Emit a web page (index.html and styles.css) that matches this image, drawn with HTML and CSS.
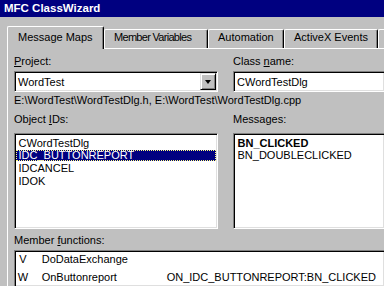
FILE: index.html
```html
<!DOCTYPE html>
<html>
<head>
<meta charset="utf-8">
<link rel="stylesheet" href="styles.css">
</head>
<body>
<div class="titlebar">MFC ClassWizard</div>
<div class="dialog">
  <div class="tabs">
    <div class="tab active w-mm">Message Maps</div>
    <div class="tab w-mv"><span class="tight">Member Variables</span></div>
    <div class="tab w-au">Automation</div>
    <div class="tab w-ax">ActiveX Events</div>
    <div class="tab w-nx"></div>
  </div>
  <div class="panel">
    <div class="pair">
      <div class="field">
        <div class="label"><u>P</u>roject:</div>
        <div class="sunken combo">
          <div class="combo-text">WordTest</div>
          <div class="dropbtn"><div class="arrow"></div></div>
        </div>
      </div>
      <div class="field">
        <div class="label">Class <u>n</u>ame:</div>
        <div class="sunken edit">CWordTestDlg</div>
      </div>
    </div>
    <div class="path">E:\WordTest\WordTestDlg.h, E:\WordTest\WordTestDlg.cpp</div>
    <div class="pair lists">
      <div class="field">
        <div class="label">Object <u>I</u>Ds:</div>
        <div class="sunken listbox">
          <div class="item">CWordTestDlg</div>
          <div class="item selected">IDC_BUTTONREPORT</div>
          <div class="item">IDCANCEL</div>
          <div class="item">IDOK</div>
        </div>
      </div>
      <div class="field">
        <div class="label">Messages:</div>
        <div class="sunken listbox">
          <div class="item bold">BN_CLICKED</div>
          <div class="item">BN_DOUBLECLICKED</div>
        </div>
      </div>
    </div>
    <div class="label mf-label">Member <u>f</u>unctions:</div>
    <div class="sunken funcs">
      <div class="frow"><span class="kind">V</span><span class="fname">DoDataExchange</span><span class="fmap"></span></div>
      <div class="frow"><span class="kind">W</span><span class="fname">OnButtonreport</span><span class="fmap">ON_IDC_BUTTONREPORT:BN_CLICKED</span></div>
    </div>
  </div>
</div>
</body>
</html>
```

FILE: styles.css
```css
* { box-sizing: border-box; }
html, body { margin: 0; padding: 0; }
body {
  width: 384px;
  height: 286px;
  overflow: hidden;
  background: #c0c0c0;
  color: #000;
  font-family: "Liberation Sans", Arial, sans-serif;
  font-size: 11px;
  line-height: 13px;
}
u { text-decoration: underline; text-underline-offset: 1px; }

.titlebar {
  height: 17px;
  background: #000080;
  color: #fff;
  font-weight: bold;
  font-size: 11.5px;
  line-height: 17px;
  padding-left: 4px;
  white-space: nowrap;
}

.dialog {
  width: 384px;
  height: 269px;
  overflow: hidden;
  padding-left: 7px;
}

.tabs {
  display: flex;
  align-items: flex-end;
  height: 31px;
}
.tab {
  height: 19px;
  border-top: 1px solid #fff;
  border-left: 1px solid #fff;
  border-right: 1px solid #000;
  border-radius: 2px 2px 0 0;
  box-shadow: inset -1px 0 0 #808080;
  padding: 1px 0 0 9px;
  white-space: nowrap;
  overflow: hidden;
  flex: none;
}
.tab.active {
  height: 23px;
  padding-top: 4px;
  padding-left: 10px;
  margin-bottom: -1px;
  position: relative;
  z-index: 1;
  background: #c0c0c0;
}
.w-mm { width: 97px; }
.w-mv { width: 104px; }
.w-au { width: 76px; }
.w-ax { width: 94px; }
.w-nx { flex: 1 0 6px; border-right: none; box-shadow: none; }
.tight { letter-spacing: -0.7px; }

.panel {
  border-top: 1px solid #fff;
  border-left: 1px solid #fff;
  padding: 6px 0 0 6px;
  display: flex;
  flex-direction: column;
  height: 238px;
  overflow: hidden;
}

.pair {
  display: grid;
  grid-template-columns: 204px 1fr;
  column-gap: 15px;
}
.field { display: flex; flex-direction: column; min-width: 0; }
.label { margin-bottom: 3px; white-space: nowrap; }

.sunken {
  background: #fff;
  border: 1px solid;
  border-color: #808080 #fff #fff #808080;
  box-shadow: inset 1px 1px 0 #000, inset -1px -1px 0 #dfdfdf;
}

.combo {
  height: 21px;
  display: flex;
}
.combo-text {
  flex: 1;
  padding: 4px 0 0 3px;
  white-space: nowrap;
}
.dropbtn {
  width: 16px;
  margin: 1px;
  background: #c0c0c0;
  border: 1px solid;
  border-color: #dfdfdf #000 #000 #dfdfdf;
  box-shadow: inset 1px 1px 0 #fff, inset -1px -1px 0 #808080;
  display: flex;
  align-items: center;
  justify-content: center;
}
.arrow {
  width: 0;
  height: 0;
  border-left: 3.5px solid transparent;
  border-right: 3.5px solid transparent;
  border-top: 4px solid #000;
  margin-top: 1px;
}
.edit {
  height: 21px;
  padding: 4px 0 0 3px;
  white-space: nowrap;
  border-right: none;
}

.path {
  margin-top: 2px;
  white-space: nowrap;
}

.lists { margin-top: 6px; }
.lists .label { margin-bottom: 7px; }

.listbox {
  height: 96px;
  padding: 3.5px 1px 1px 1px;
  display: flex;
  flex-direction: column;
  gap: 1.7px;
}
.lists .field + .field .listbox { border-right: none; }
.item {
  height: 11px;
  line-height: 11px;
  padding-left: 2.5px;
  white-space: nowrap;
}
.item.selected {
  background: #000080;
  color: #fff;
  outline: 1px dotted #ffff80;
  outline-offset: -1px;
}
.item.bold { font-weight: bold; }

.mf-label { margin-top: 5px; }

.funcs {
  flex: 1;
  padding: 3.3px 1px 0 1px;
  border-right: none;
  border-bottom: none;
  display: flex;
  flex-direction: column;
  gap: 6.6px;
}
.frow {
  display: grid;
  grid-template-columns: 14px 136.7px auto;
  height: 11px;
  line-height: 11px;
  white-space: nowrap;
}
.kind { text-align: center; }
.fname { padding-left: 11.7px; }
```
